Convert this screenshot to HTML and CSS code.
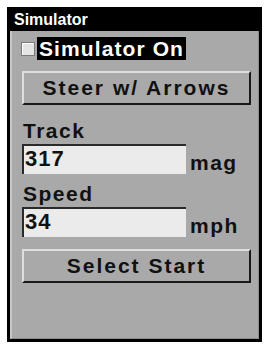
FILE: index.html
```html
<!DOCTYPE html>
<html lang="en">
<head>
    <meta charset="UTF-8">
    <title>Simulator</title>
    <link rel="stylesheet" href="styles.css">
</head>
<body>
    <div class="screen">
        <div class="title">Simulator</div>
        <div class="panel">
            <div class="check-row">
                <span class="checkbox"></span>
                <span class="check-label">Simulator On</span>
            </div>

            <div class="button first">Steer w/ Arrows</div>

            <div class="field-label track">Track</div>
            <div class="field">
                <div class="input">317</div>
                <div class="unit">mag</div>
            </div>

            <div class="field-label speed">Speed</div>
            <div class="field">
                <div class="input">34</div>
                <div class="unit">mph</div>
            </div>

            <div class="button last">Select Start</div>
        </div>
    </div>
</body>
</html>
```

FILE: styles.css
```css
* {
    margin: 0;
    padding: 0;
    box-sizing: border-box;
}

body {
    background: #fff;
    font-family: 'Liberation Sans', Arial, sans-serif;
    font-weight: bold;
    color: #111;
}

.screen {
    margin: 7px 0 0 7px;
    width: 255px;
    height: 335px;
    border: 3px solid #000;
    background: #000;
    display: flex;
    flex-direction: column;
}

.title {
    height: 21px;
    color: #fff;
    font-size: 16px;
    line-height: 20px;
    padding-left: 4px;
}

.panel {
    flex: 1;
    background: #a9a9a9;
    border-left: 2px solid #c9c9c9;
    border-right: 1px solid #8c8c8c;
    border-bottom: 1px solid #8c8c8c;
    padding-left: 9px;
}

.check-row {
    display: flex;
    align-items: center;
    margin-top: 6px;
    height: 23px;
}

.checkbox {
    width: 14px;
    height: 14px;
    background: #e4e4e4;
    border: 1px solid #7a7a7a;
    box-shadow: inset 1px 1px 0 #fff;
    margin-right: 2px;
}

.check-label {
    background: #000;
    color: #fff;
    font-size: 21px;
    line-height: 23px;
    letter-spacing: 1.1px;
    padding: 0 2px 0 2px;
    font-weight: bold;
}

.button {
    width: 229px;
    height: 34px;
    margin-left: 1px;
    border-top: 2px solid #dedede;
    border-left: 2px solid #dedede;
    border-bottom: 2px solid #1a1a1a;
    border-right: 2px solid #1a1a1a;
    font-size: 21px;
    line-height: 30px;
    letter-spacing: 2px;
    text-align: center;
}

.button.first {
    margin-top: 11px;
}

.button.last {
    margin-top: 12px;
}

.field-label {
    font-size: 21px;
    line-height: 22px;
    letter-spacing: 1.5px;
    margin-left: 2px;
}

.field-label.track {
    margin-top: 15px;
}

.field-label.speed {
    margin-top: 9px;
}

.field {
    display: flex;
    align-items: flex-end;
    margin-top: 2px;
}

.input {
    width: 164px;
    height: 30px;
    margin-left: 1px;
    background: #ebebeb;
    border-top: 2px solid #2a2a2a;
    border-left: 2px solid #2a2a2a;
    font-size: 22px;
    line-height: 26px;
    padding-left: 1px;
    letter-spacing: 1px;
}

.unit {
    font-size: 21px;
    line-height: 20px;
    letter-spacing: 1.5px;
    margin-left: 4px;
    margin-bottom: 1px;
}
```
